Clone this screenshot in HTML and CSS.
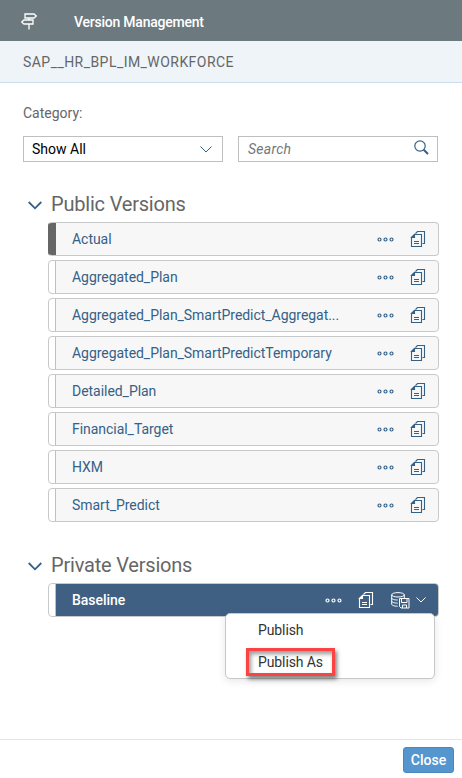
FILE: index.html
```html
<!DOCTYPE html>
<html lang="en">
<head>
<meta charset="utf-8">
<title>Version Management</title>
<link rel="stylesheet" href="styles.css">
</head>
<body>
<svg class="defs" width="0" height="0">
  <symbol id="copy" viewBox="0 0 16 16"><path d="M5.500 2.500l2-2h7v12h-2M4.500 3.500h7v12h-10v-9z"/><path d="M1.500 6.500h3v-3z" fill="currentColor"/><path d="M4 10.500h5M4 12.500h5"/></symbol>
  <symbol id="dots" viewBox="0 0 17 5"><circle cx="2.500" cy="2.500" r="1.500"/><circle cx="8.500" cy="2.500" r="1.500"/><circle cx="14.500" cy="2.500" r="1.500"/></symbol>
</svg>
<div class="panel">
  <header class="titlebar">
    <svg class="sign" width="16" height="17" viewBox="0 0 16 17"><path d="M4 1h9l2.300 2L13 5H4zM12 7H3L.7 9 3 11h9zM8 5v2M8 11v5.500"/></svg>
    <h1>Version Management</h1>
  </header>
  <div class="model">SAP__HR_BPL_IM_WORKFORCE</div>
  <main>
    <div class="label">Category:</div>
    <div class="filters">
      <div class="field"><span class="value">Show All</span><svg class="arrow" width="12" height="7" viewBox="0 0 12 7"><path d="M.5.5 6 6 11.500.5"/></svg></div>
      <div class="field"><span class="hint">Search</span><svg class="lens" width="15" height="15" viewBox="0 0 15 15"><circle cx="6" cy="6" r="5.200"/><path d="m9.700 9.700 4.300 4.300" stroke-width="2"/></svg></div>
    </div>
    <section>
      <h2><svg width="14" height="9" viewBox="0 0 14 9"><path d="m.7 1 6.300 6.300L13.300 1"/></svg><span>Public Versions</span></h2>
      <ul>
        <li class="actual"><span class="name">Actual</span><svg class="dots"><use href="#dots"/></svg><svg class="copy"><use href="#copy"/></svg></li>
        <li><span class="name">Aggregated_Plan</span><svg class="dots"><use href="#dots"/></svg><svg class="copy"><use href="#copy"/></svg></li>
        <li><span class="name">Aggregated_Plan_SmartPredict_Aggregat...</span><svg class="dots"><use href="#dots"/></svg><svg class="copy"><use href="#copy"/></svg></li>
        <li><span class="name">Aggregated_Plan_SmartPredictTemporary</span><svg class="dots"><use href="#dots"/></svg><svg class="copy"><use href="#copy"/></svg></li>
        <li><span class="name">Detailed_Plan</span><svg class="dots"><use href="#dots"/></svg><svg class="copy"><use href="#copy"/></svg></li>
        <li><span class="name">Financial_Target</span><svg class="dots"><use href="#dots"/></svg><svg class="copy"><use href="#copy"/></svg></li>
        <li><span class="name">HXM</span><svg class="dots"><use href="#dots"/></svg><svg class="copy"><use href="#copy"/></svg></li>
        <li><span class="name">Smart_Predict</span><svg class="dots"><use href="#dots"/></svg><svg class="copy"><use href="#copy"/></svg></li>
      </ul>
    </section>
    <section class="private">
      <h2><svg width="14" height="9" viewBox="0 0 14 9"><path d="m.7 1 6.300 6.300L13.300 1"/></svg><span>Private Versions</span></h2>
      <ul>
        <li class="selected"><span class="name">Baseline</span><svg class="dots"><use href="#dots"/></svg><svg class="copy"><use href="#copy"/></svg>
          <svg class="save" width="19" height="17" viewBox="0 0 19 17"><ellipse cx="7" cy="2.800" rx="6.300" ry="2.200"/><path d="M.7 2.800v9.400c0 1.200 2.500 2 6 2M13.300 2.800V6M.7 6c0 1.200 2.500 2 6 2M.7 9.100c0 1.200 2.500 2 6 2"/><path d="M8.500 6.500h9.500v9.500h-8l-1.500-1.500zM10.500 6.500v4h5.500v-4M11.500 16v-3h4v3"/></svg>
          <svg class="caret" width="10" height="6" viewBox="0 0 10 6"><path d="M.5.5 5 5 9.500.5"/></svg>
          <div class="menu"><div class="option">Publish</div><div class="option"><span class="marked">Publish As</span></div></div>
        </li>
      </ul>
    </section>
  </main>
  <footer><button>Close</button></footer>
</div>
</body>
</html>
```
FILE: styles.css
```css
* { box-sizing: border-box; }
body { margin: 0; font: 14px/20px Roboto, sans-serif; letter-spacing: 0; background: #fff; color: #666; }
svg { display: block; flex: none; fill: none; stroke: currentColor; stroke-width: 1; }
.defs { position: absolute; }
.panel { display: flex; flex-direction: column; width: 462px; height: 778px; overflow: hidden; }
.titlebar { display: flex; align-items: center; height: 41px; padding: 2px 0 0 21px; background: #6c797f; color: #fff; }
.sign { stroke-width: 1.300; }
h1 { margin: 0 0 0 37px; font-size: 14px; font-weight: 500; letter-spacing: -.23px; }
.model { height: 42px; padding: 11px 23px 0; background: #eff4f9; border-bottom: 1px solid #c9dfef; letter-spacing: .45px; }
main { flex: 1; padding: 20px 23px 0; }
.label { line-height: 20px; }
.filters { display: flex; gap: 15px; margin-top: 13px; }
.field { display: flex; align-items: center; justify-content: space-between; width: 200px; height: 26px; padding: 0 10px 0 8px; border: 1px solid #bfbfbf; color: #346187; }
.value { color: #000; }
.hint { padding-left: 1px; color: #74777a; font-style: italic; letter-spacing: .25px; }
.lens { margin-top: -3px; margin-right: -2px; stroke-width: 1.200; }
section { margin-top: 27px; }
h2 { display: flex; align-items: center; gap: 9px; height: 30px; margin: 0 0 3px 5px; font-size: 20px; line-height: 30px; font-weight: 400; letter-spacing: -.2px; }
h2 svg { color: #346187; stroke-width: 1.800; margin-top: 3px; }
ul { display: grid; gap: 4px; margin: 0 0 0 25px; padding: 0; list-style: none; }
li { display: flex; align-items: center; position: relative; width: 391px; height: 34px; padding-right: 12px; border: 1px solid #c8c9ca; border-radius: 4px; background: linear-gradient(90deg, #fff 6px, #c0c0c0 6px 7px, #f7f7f7 7px); color: #346187; }
.actual { background: linear-gradient(90deg, #666 7px, #f7f7f7 7px); border-left-color: #666; }
.name { flex: 1; padding-left: 23px; white-space: nowrap; letter-spacing: -.04px; }
.dots { width: 17px; height: 5px; margin-right: 16px; stroke-width: 1.200; }
.copy { width: 16px; height: 16px; stroke-width: 1.100; }
.private { margin-top: 28px; }
.selected { background: linear-gradient(90deg, #fff 6px, #c0c0c0 6px 7px, #406083 7px); color: #fff; }
.selected .name { font-weight: 500; }
.save { margin-left: 17px; }
.caret { margin-left: 6px; }
.menu { position: absolute; z-index: 1; top: 29px; right: 3px; width: 210px; height: 66px; border: 1px solid #c7c7c7; border-radius: 5px; background: #fff; color: #333; letter-spacing: -.1px; box-shadow: 0 2px 8px rgba(0,0,0,.1); }
.option { height: 32px; padding-left: 32px; line-height: 32px; }
.marked { display: block; width: 89px; height: 28px; margin-left: -12px; padding-left: 9px; border: 3px solid #fa4444; line-height: 23px; box-shadow: 2px 3px 4px rgba(0,0,0,.5), inset 2px 3px 4px rgba(0,0,0,.4); position: relative; top: 2px; }
footer { display: flex; justify-content: flex-end; height: 39px; padding: 7px 8px 0; border-top: 1px solid #e5e5e5; }
button { width: 51px; height: 26px; padding: 0; border: 1px solid #4a87c0; border-radius: 3px; background: #5496cd; color: #fff; font: 500 14px/20px Roboto, sans-serif; }
```
